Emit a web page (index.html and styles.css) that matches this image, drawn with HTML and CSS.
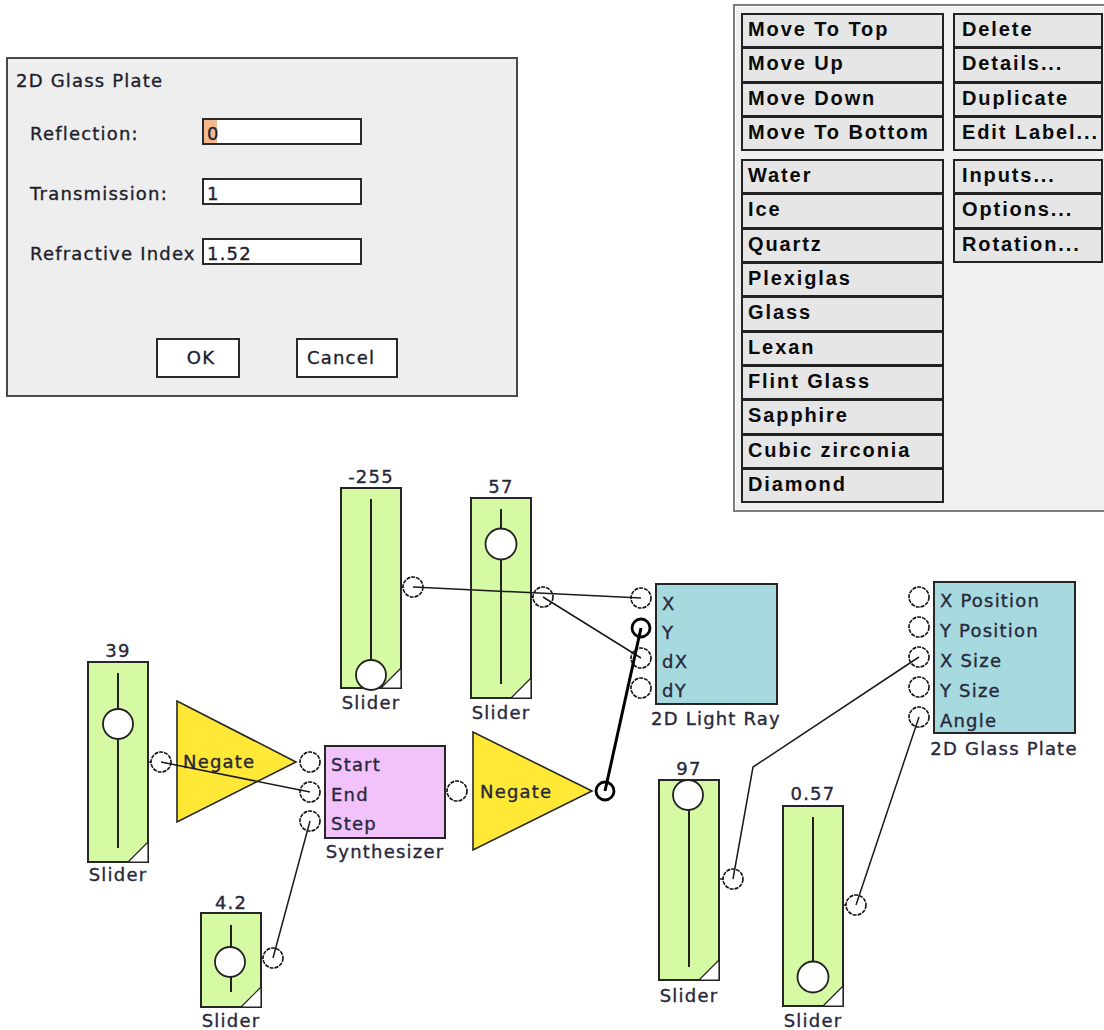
FILE: index.html
```html
<!doctype html>
<html>
  <head>
    <title>2D Glass Plate</title>
    <meta charset="utf-8"/>
    <link rel="stylesheet" href="styles.css">
  </head>
  <body>
    <svg class="canvas" width="1104" height="1030" viewBox="0 0 1104 1030">
      <!-- sliders -->
      <g>
        <rect class="slider" x="341" y="488" width="60" height="200"/>
        <line class="track" x1="371" y1="499" x2="371" y2="662"/>
        <polygon class="corner" points="381,688 401,668 401,688"/>
        <circle class="knob" cx="371" cy="675" r="15"/>
        <text class="lbl mid" x="371" y="483">-255</text>
        <text class="lbl mid" x="371" y="709">Slider</text>
      </g>
      <g>
        <rect class="slider" x="471" y="498" width="60" height="200"/>
        <line class="track" x1="501" y1="509" x2="501" y2="684"/>
        <polygon class="corner" points="511,698 531,678 531,698"/>
        <circle class="knob" cx="501" cy="544" r="15.5"/>
        <text class="lbl mid" x="501" y="493">57</text>
        <text class="lbl mid" x="501" y="719">Slider</text>
      </g>
      <g>
        <rect class="slider" x="88" y="662" width="60" height="200"/>
        <line class="track" x1="118" y1="673" x2="118" y2="848"/>
        <polygon class="corner" points="128,862 148,842 148,862"/>
        <circle class="knob" cx="118" cy="724" r="15"/>
        <text class="lbl mid" x="118" y="657">39</text>
        <text class="lbl mid" x="118" y="881">Slider</text>
      </g>
      <g>
        <rect class="slider" x="201" y="913" width="60" height="94"/>
        <line class="track" x1="231" y1="925" x2="231" y2="992"/>
        <polygon class="corner" points="241,1007 261,987 261,1007"/>
        <circle class="knob" cx="230" cy="962" r="15"/>
        <text class="lbl mid" x="231" y="909">4.2</text>
        <text class="lbl mid" x="231" y="1027">Slider</text>
      </g>
      <g>
        <rect class="slider" x="659" y="780" width="60" height="200"/>
        <line class="track" x1="689" y1="808" x2="689" y2="967"/>
        <polygon class="corner" points="699,980 719,960 719,980"/>
        <circle class="knob" cx="688" cy="795" r="15"/>
        <text class="lbl mid" x="689" y="775">97</text>
        <text class="lbl mid" x="689" y="1002">Slider</text>
      </g>
      <g>
        <rect class="slider" x="783" y="806" width="60" height="200"/>
        <line class="track" x1="813" y1="817" x2="813" y2="965"/>
        <polygon class="corner" points="823,1006 843,986 843,1006"/>
        <circle class="knob" cx="813" cy="977" r="15.5"/>
        <text class="lbl mid" x="813" y="800">0.57</text>
        <text class="lbl mid" x="813" y="1027">Slider</text>
      </g>

      <!-- negate blocks -->
      <polygon class="negate" points="177,701 177,822 296,762"/>
      <text class="lbl" x="183" y="768">Negate</text>
      <polygon class="negate" points="473,732 473,850 592,791"/>
      <text class="lbl" x="480" y="798">Negate</text>

      <!-- synthesizer -->
      <rect class="synth" x="325" y="746" width="120" height="92"/>
      <text class="lbl" x="331" y="771">Start</text>
      <text class="lbl" x="331" y="801">End</text>
      <text class="lbl" x="331" y="830">Step</text>
      <text class="lbl mid" x="385" y="858">Synthesizer</text>

      <!-- 2D light ray -->
      <rect class="ray" x="656" y="584" width="121" height="120"/>
      <text class="lbl" x="662" y="610">X</text>
      <text class="lbl" x="662" y="639">Y</text>
      <text class="lbl" x="662" y="668">dX</text>
      <text class="lbl" x="662" y="697">dY</text>
      <text class="lbl mid" x="716" y="725">2D Light Ray</text>

      <!-- 2D glass plate -->
      <rect class="ray" x="934" y="582" width="141" height="151"/>
      <text class="lbl" x="940" y="607">X Position</text>
      <text class="lbl" x="940" y="637">Y Position</text>
      <text class="lbl" x="940" y="667">X Size</text>
      <text class="lbl" x="940" y="697">Y Size</text>
      <text class="lbl" x="940" y="727">Angle</text>
      <text class="lbl mid" x="1004" y="755">2D Glass Plate</text>

      <!-- ports -->
      <line class="tick" x1="401" y1="587" x2="403" y2="587"/>
      <line class="tick" x1="531" y1="597" x2="533" y2="597"/>
      <line class="tick" x1="148" y1="762" x2="151" y2="762"/>
      <line class="tick" x1="261" y1="958" x2="263" y2="958"/>
      <line class="tick" x1="719" y1="879" x2="723" y2="879"/>
      <line class="tick" x1="843" y1="905" x2="846" y2="905"/>
      <circle class="port" cx="413" cy="587" r="10"/>
      <circle class="port" cx="543" cy="597" r="10"/>
      <circle class="port" cx="161" cy="762" r="10"/>
      <circle class="port" cx="273" cy="958" r="10"/>
      <circle class="port" cx="733" cy="879" r="10"/>
      <circle class="port" cx="856" cy="905" r="10"/>
      <circle class="port" cx="310" cy="762" r="10"/>
      <circle class="port" cx="310" cy="792" r="10"/>
      <circle class="port" cx="310" cy="821" r="10"/>
      <circle class="port" cx="457" cy="791" r="10"/>
      <circle class="port" cx="641" cy="598" r="10"/>
      <circle class="port sel" cx="641" cy="628" r="9"/>
      <circle class="port" cx="641" cy="658" r="10"/>
      <circle class="port" cx="641" cy="688" r="10"/>
      <circle class="port sel" cx="605" cy="791" r="9"/>
      <circle class="port" cx="919" cy="597" r="10"/>
      <circle class="port" cx="919" cy="627" r="10"/>
      <circle class="port" cx="919" cy="657" r="10"/>
      <circle class="port" cx="919" cy="687" r="10"/>
      <circle class="port" cx="919" cy="717" r="10"/>

      <!-- wires -->
      <line class="wire" x1="413" y1="587" x2="641" y2="598"/>
      <line class="wire" x1="543" y1="597" x2="641" y2="658"/>
      <line class="wire thick" x1="641" y1="628" x2="605" y2="791"/>
      <line class="wire" x1="161" y1="762" x2="310" y2="792"/>
      <line class="wire" x1="273" y1="958" x2="310" y2="821"/>
      <polyline class="wire" points="733,879 753,767 919,657"/>
      <line class="wire" x1="856" y1="905" x2="919" y2="717"/>
    </svg>

    <div class="dialog">
      <div class="dialog-title">2D Glass Plate</div>
      <div class="form">
        <div class="row">
          <span class="label">Reflection:</span>
          <div class="field selected">0</div>
        </div>
        <div class="row">
          <span class="label">Transmission:</span>
          <div class="field">1</div>
        </div>
        <div class="row">
          <span class="label">Refractive Index</span>
          <div class="field">1.52</div>
        </div>
      </div>
      <div class="actions">
        <button class="btn ok">OK</button>
        <button class="btn cancel">Cancel</button>
      </div>
    </div>

    <div class="menu">
      <div class="col left">
        <div class="group">
          <div class="item">Move To Top</div>
          <div class="item">Move Up</div>
          <div class="item">Move Down</div>
          <div class="item">Move To Bottom</div>
        </div>
        <div class="group">
          <div class="item">Water</div>
          <div class="item">Ice</div>
          <div class="item">Quartz</div>
          <div class="item">Plexiglas</div>
          <div class="item">Glass</div>
          <div class="item">Lexan</div>
          <div class="item">Flint Glass</div>
          <div class="item">Sapphire</div>
          <div class="item">Cubic zirconia</div>
          <div class="item">Diamond</div>
        </div>
      </div>
      <div class="col right">
        <div class="group">
          <div class="item">Delete</div>
          <div class="item">Details...</div>
          <div class="item">Duplicate</div>
          <div class="item">Edit Label...</div>
        </div>
        <div class="group">
          <div class="item">Inputs...</div>
          <div class="item">Options...</div>
          <div class="item">Rotation...</div>
        </div>
      </div>
    </div>
  </body>
</html>
```

FILE: styles.css
```css
html,body{
  margin:0;
  padding:0;
}
body{
  position:relative;
  width:1104px;
  height:1030px;
  overflow:hidden;
  background:#fff;
  display:flex;
  align-items:flex-start;
  font-family:"DejaVu Sans",sans-serif;
}

/* diagram canvas */
.canvas{
  position:absolute;
  left:0;
  top:0;
  z-index:0;
}
.lbl{
  font-family:"DejaVu Sans",sans-serif;
  font-size:18px;
  letter-spacing:1.2px;
  fill:#28283c;
  stroke:#28283c;
  stroke-width:0.35;
}
.mid{
  text-anchor:middle;
}
.slider{
  fill:#d6f9a4;
  stroke:#262626;
  stroke-width:2;
}
.track{
  stroke:#222;
  stroke-width:2;
}
.corner{
  fill:#fff;
  stroke:#222;
  stroke-width:1.2;
}
.knob{
  fill:#fff;
  stroke:#222;
  stroke-width:1.8;
}
.negate{
  fill:#ffe836;
  stroke:#262626;
  stroke-width:1.6;
}
.synth{
  fill:#f2c2fa;
  stroke:#262626;
  stroke-width:2;
}
.ray{
  fill:#a6dade;
  stroke:#262626;
  stroke-width:2;
}
.port{
  fill:none;
  stroke:#111;
  stroke-width:1.6;
  stroke-dasharray:4 1;
}
.port.sel{
  stroke:#000;
  stroke-width:2.8;
  stroke-dasharray:none;
}
.tick{
  stroke:#222;
  stroke-width:1.5;
}
.wire{
  fill:none;
  stroke:#1a1a1a;
  stroke-width:1.5;
}
.wire.thick{
  stroke:#000;
  stroke-width:3;
}

/* dialog window */
.dialog{
  position:relative;
  z-index:1;
  flex-shrink:0;
  box-sizing:border-box;
  width:512px;
  height:340px;
  margin:57px 0 0 6px;
  padding:11px 0 0 8px;
  border:2px solid #4a4a4a;
  background:#eeeeee;
  color:#1e1e2e;
  font-size:18px;
  letter-spacing:1.2px;
  -webkit-text-stroke:0.35px #1e1e2e;
}
.dialog-title{
  line-height:22px;
}
.form{
  margin-top:26px;
  padding-left:14px;
  display:flex;
  flex-direction:column;
  gap:33px;
}
.row{
  display:flex;
  align-items:baseline;
}
.label{
  width:172px;
  line-height:22px;
  white-space:nowrap;
}
.field{
  box-sizing:border-box;
  width:160px;
  height:27px;
  padding:3px 0 0 3px;
  line-height:22px;
  overflow:hidden;
  border:2px solid #2a2a2a;
  background:#fff;
}
.field.selected{
  background:linear-gradient(to right,#f6b98e 13px,#fff 13px);
}
.actions{
  margin-top:73px;
  padding-left:140px;
  display:flex;
  gap:56px;
}
.btn{
  box-sizing:border-box;
  height:40px;
  padding:0;
  border:2px solid #2a2a2a;
  background:#fff;
  color:#1e1e2e;
  font:inherit;
  letter-spacing:1.2px;
  line-height:36px;
}
.ok{
  width:84px;
  padding-left:6px;
  text-align:center;
}
.cancel{
  width:102px;
  padding-left:9px;
  text-align:left;
}

/* context menu */
.menu{
  position:relative;
  z-index:1;
  flex-shrink:0;
  box-sizing:border-box;
  width:400px;
  margin:4px 0 0 215px;
  padding:7px 0 7px 6px;
  border:2px solid #7e7e7e;
  box-shadow:inset 1px 1px 0 #fff;
  background:#f0f0f0;
  display:flex;
  gap:9px;
  align-items:flex-start;
  font-family:"Liberation Sans",Arial,sans-serif;
  font-weight:bold;
  font-size:20px;
  letter-spacing:1.9px;
  color:#0a0a0a;
}
.col{
  display:flex;
  flex-direction:column;
  gap:8px;
}
.col.left{
  width:203px;
}
.col.right{
  width:150px;
}
.group{
  display:flex;
  flex-direction:column;
}
.item{
  box-sizing:border-box;
  height:35.3px;
  padding-left:5px;
  border:2px solid #222;
  background:#e6e6e6;
  line-height:28px;
  white-space:nowrap;
  overflow:hidden;
}
.item + .item{
  margin-top:-1px;
}
.right .item{
  padding-left:7px;
}
```
